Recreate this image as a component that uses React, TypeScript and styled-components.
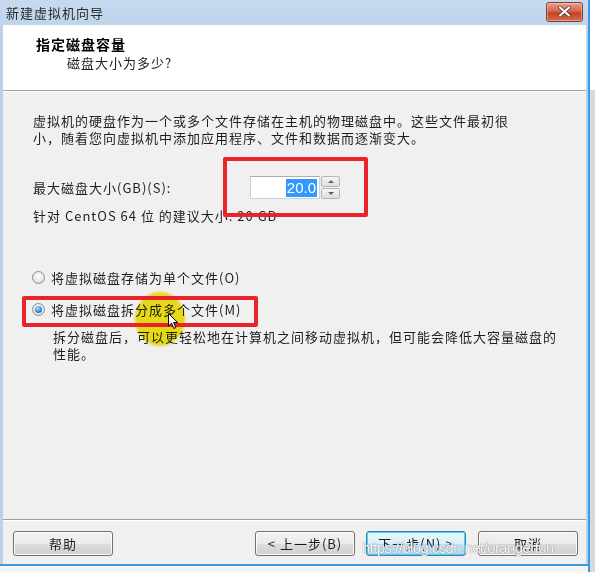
import React from 'react';
import styled, { createGlobalStyle, css } from 'styled-components';

const GlobalStyle = createGlobalStyle`
  html, body {
    margin: 0;
    padding: 0;
    background: #e6e6e6;
  }
  body {
    font-family: "Noto Sans CJK SC", "Liberation Sans", sans-serif;
    font-size: 13px;
    letter-spacing: 1px;
    color: #1e1e1e;
  }
`;

const Page = styled.div`
  display: flex;
  width: 595px;
  height: 572px;
  overflow: hidden;
`;

const Window = styled.div`
  position: relative;
  width: 583px;
  height: 572px;
  flex-shrink: 0;
  display: flex;
  flex-direction: column;
  background: linear-gradient(#c6daef, #b9d1ea 40px);
  padding: 0 2px 0 3px;
`;

const SideStrip = styled.div`
  flex: 1;
  border-left: 2px solid #3b9be0;
  background: linear-gradient(#ffffff 0, #ffffff 90px, #d9d9d9 90px);
`;

const TitleBar = styled.div`
  height: 25px;
  margin-left: -3px;
  margin-right: -2px;
  display: flex;
  align-items: center;
  justify-content: space-between;
  padding: 0 5px 0 6px;
  box-sizing: border-box;
`;

const TitleText = styled.span`
  font-size: 13px;
  color: #2a2a2a;
  letter-spacing: 1px;
  margin-top: -1px;
`;

const CloseButton = styled.div`
  width: 35px;
  height: 18px;
  margin-top: -2px;
  border: 1px solid #8a3a2c;
  border-radius: 3px;
  background: linear-gradient(#e7a08e 0%, #d5654c 45%, #c4401f 55%, #d2704f 100%);
  display: flex;
  align-items: center;
  justify-content: center;
  box-shadow: inset 0 0 0 1px rgba(255, 255, 255, 0.35);
`;

const Client = styled.div`
  flex: 1;
  display: flex;
  flex-direction: column;
  background: #f0f0f0;
`;

const Header = styled.div`
  height: 65px;
  background: #ffffff;
  padding: 10px 0 0 33px;
  box-sizing: border-box;
`;

const HeaderTitle = styled.div`
  font-size: 14px;
  font-weight: 700;
  line-height: 19px;
  color: #000;
`;

const HeaderSub = styled.div`
  margin-left: 31px;
  line-height: 18px;
`;

const Rule = styled.div`
  height: 1px;
  border-top: 1px solid #a0a0a0;
  background: #ffffff;
`;

const Body = styled.div`
  flex: 1;
  padding: 20px 20px 0 30px;
  display: flex;
  flex-direction: column;
  line-height: 17px;
`;

const Paragraph = styled.p`
  margin: 0;
  width: 490px;
`;

const SizeRow = styled.div`
  margin-top: 30px;
  display: flex;
  align-items: center;
  height: 23px;
`;

const SizeLabel = styled.span`
  width: 217px;
`;

const Spin = styled.div`
  display: flex;
  align-items: stretch;
  height: 23px;
`;

const SpinInput = styled.div`
  width: 70px;
  box-sizing: border-box;
  background: #fff;
  border: 1px solid #c5d3e2;
  border-top-color: #abadb3;
  display: flex;
  align-items: center;
  justify-content: flex-end;
  padding-right: 2px;
`;

const Selected = styled.span`
  background: #3399ff;
  color: #fff;
  font-family: "Liberation Sans", Arial, sans-serif;
  font-size: 15px;
  letter-spacing: 0;
  line-height: 18px;
  padding: 0 1px;
`;

const SpinButtons = styled.div`
  width: 19px;
  margin-left: 1px;
  display: flex;
  flex-direction: column;
  gap: 1px;
`;

const SpinButton = styled.div`
  flex: 1;
  border: 1px solid #b5b5b5;
  border-radius: 2px;
  background: linear-gradient(#f6f6f6, #dedede);
  display: flex;
  align-items: center;
  justify-content: center;
`;

const Arrow = styled.span<{ $up?: boolean }>`
  width: 0;
  height: 0;
  border-left: 3px solid transparent;
  border-right: 3px solid transparent;
  ${({ $up }) =>
    $up
      ? css`border-bottom: 3px solid #4d6185;`
      : css`border-top: 3px solid #4d6185;`}
`;

const Hint = styled.div`
  margin-top: 8px;
`;

const RadioRow = styled.label<{ $first?: boolean }>`
  display: flex;
  align-items: center;
  gap: 6px;
  margin-top: ${({ $first }) => ($first ? '45px' : '15px')};
  margin-left: -1px;
`;

const RadioDot = styled.span<{ $checked?: boolean }>`
  width: 13px;
  height: 13px;
  box-sizing: border-box;
  border-radius: 50%;
  border: 1px solid #8e8f8f;
  background: radial-gradient(circle at 50% 40%, #ffffff 0%, #e6e6e6 60%, #cfcfcf 100%);
  display: flex;
  align-items: center;
  justify-content: center;
  &::after {
    content: '';
    display: ${({ $checked }) => ($checked ? 'block' : 'none')};
    width: 7px;
    height: 7px;
    border-radius: 50%;
    background: radial-gradient(circle at 40% 35%, #bfe6ff 0%, #2a8ad4 55%, #0d4f8f 100%);
  }
`;

const Description = styled.p`
  margin: 10px 0 0 20px;
  width: 508px;
`;

const Footer = styled.div`
  height: 43px;
  display: flex;
  align-items: flex-start;
  padding: 10px 8px 0 10px;
  box-sizing: border-box;
`;

const Button = styled.div<{ $focused?: boolean; $gap?: number }>`
  width: 100px;
  height: 25px;
  box-sizing: border-box;
  margin-left: ${({ $gap }) => $gap ?? 0}px;
  border: 1px solid #707070;
  border-radius: 3px;
  background: linear-gradient(#f2f2f2 0%, #ebebeb 50%, #dddddd 51%, #cfcfcf 100%);
  box-shadow: inset 0 0 0 1px #fcfcfc;
  display: flex;
  align-items: center;
  justify-content: center;
  font-size: 13px;
  ${({ $focused }) =>
    $focused &&
    css`
      border-color: #3c7fb1;
      background: linear-gradient(#eaf6fd 0%, #d9f0fc 50%, #bee6fd 51%, #a7d9f5 100%);
      box-shadow: inset 0 0 0 1px #48d4f8;
    `}
`;

const Spacer = styled.div`
  flex: 1;
`;

const BottomEdge = styled.div`
  height: 6px;
  margin: 0 -2px 0 -3px;
  border-top: 2px solid #3b9be0;
  background: #f4f4f4;
`;

const RedBox = styled.div<{ $x: number; $y: number; $w: number; $h: number }>`
  position: absolute;
  left: ${({ $x }) => $x}px;
  top: ${({ $y }) => $y}px;
  width: ${({ $w }) => $w}px;
  height: ${({ $h }) => $h}px;
  box-sizing: border-box;
  border: 4px solid #e8232b;
  border-radius: 2px;
  pointer-events: none;
`;

const Highlight = styled.div`
  position: absolute;
  left: 135px;
  top: 292px;
  width: 50px;
  height: 54px;
  border-radius: 50%;
  background: #f2e400;
  mix-blend-mode: multiply;
  opacity: 0.9;
  filter: blur(1px);
`;

const Cursor = styled.svg`
  position: absolute;
  left: 168px;
  top: 313px;
`;

const Watermark = styled.div`
  position: absolute;
  left: 362px;
  top: 539px;
  font-family: "Liberation Sans", Arial, sans-serif;
  font-size: 15px;
  letter-spacing: -0.6px;
  color: rgba(255, 255, 255, 0.9);
  text-shadow: 0 0 1px #8a8a8a, 0 0 1px #8a8a8a;
  pointer-events: none;
`;

export default function App() {
  return (
    <Page>
      <GlobalStyle />
      <Window>
        <TitleBar>
          <TitleText>新建虚拟机向导</TitleText>
          <CloseButton>
            <svg width="13" height="11" viewBox="0 0 13 11">
              <path
                d="M2 1.5 L11 9.5 M11 1.5 L2 9.5"
                stroke="#5a2a22"
                strokeWidth="3.6"
                strokeLinecap="round"
              />
              <path
                d="M2 1.5 L11 9.5 M11 1.5 L2 9.5"
                stroke="#ffffff"
                strokeWidth="2.2"
                strokeLinecap="round"
              />
            </svg>
          </CloseButton>
        </TitleBar>
        <Client>
          <Header>
            <HeaderTitle>指定磁盘容量</HeaderTitle>
            <HeaderSub>磁盘大小为多少?</HeaderSub>
          </Header>
          <Rule />
          <Body>
            <Paragraph>
              虚拟机的硬盘作为一个或多个文件存储在主机的物理磁盘中。这些文件最初很小，随着您向虚拟机中添加应用程序、文件和数据而逐渐变大。
            </Paragraph>
            <SizeRow>
              <SizeLabel>最大磁盘大小(GB)(S):</SizeLabel>
              <Spin>
                <SpinInput>
                  <Selected>20.0</Selected>
                </SpinInput>
                <SpinButtons>
                  <SpinButton>
                    <Arrow $up />
                  </SpinButton>
                  <SpinButton>
                    <Arrow />
                  </SpinButton>
                </SpinButtons>
              </Spin>
            </SizeRow>
            <Hint>针对 CentOS 64 位 的建议大小: 20 GB</Hint>
            <RadioRow $first>
              <RadioDot />
              将虚拟磁盘存储为单个文件(O)
            </RadioRow>
            <RadioRow>
              <RadioDot $checked />
              将虚拟磁盘拆分成多个文件(M)
            </RadioRow>
            <Description>
              拆分磁盘后，可以更轻松地在计算机之间移动虚拟机，但可能会降低大容量磁盘的性能。
            </Description>
          </Body>
          <Rule />
          <Footer>
            <Button>帮助</Button>
            <Spacer />
            <Button>&lt; 上一步(B)</Button>
            <Button $focused $gap={11}>
              下一步(N) &gt;
            </Button>
            <Button $gap={12}>取消</Button>
          </Footer>
        </Client>
        <BottomEdge />

        <Highlight />
        <RedBox $x={223} $y={157} $w={145} $h={60} />
        <RedBox $x={22} $y={296} $w={236} $h={31} />
        <Cursor width="11" height="17" viewBox="0 0 11 17">
          <path
            d="M0.5 0.5 L0.5 13 L3.5 10.2 L5.8 15.5 L7.8 14.6 L5.6 9.5 L9.6 9.5 Z"
            fill="#ffffff"
            stroke="#000000"
            strokeWidth="1"
            strokeLinejoin="round"
          />
        </Cursor>
        <Watermark>https://blog.csdn.net/orangerfun</Watermark>
      </Window>
      <SideStrip />
    </Page>
  );
}
